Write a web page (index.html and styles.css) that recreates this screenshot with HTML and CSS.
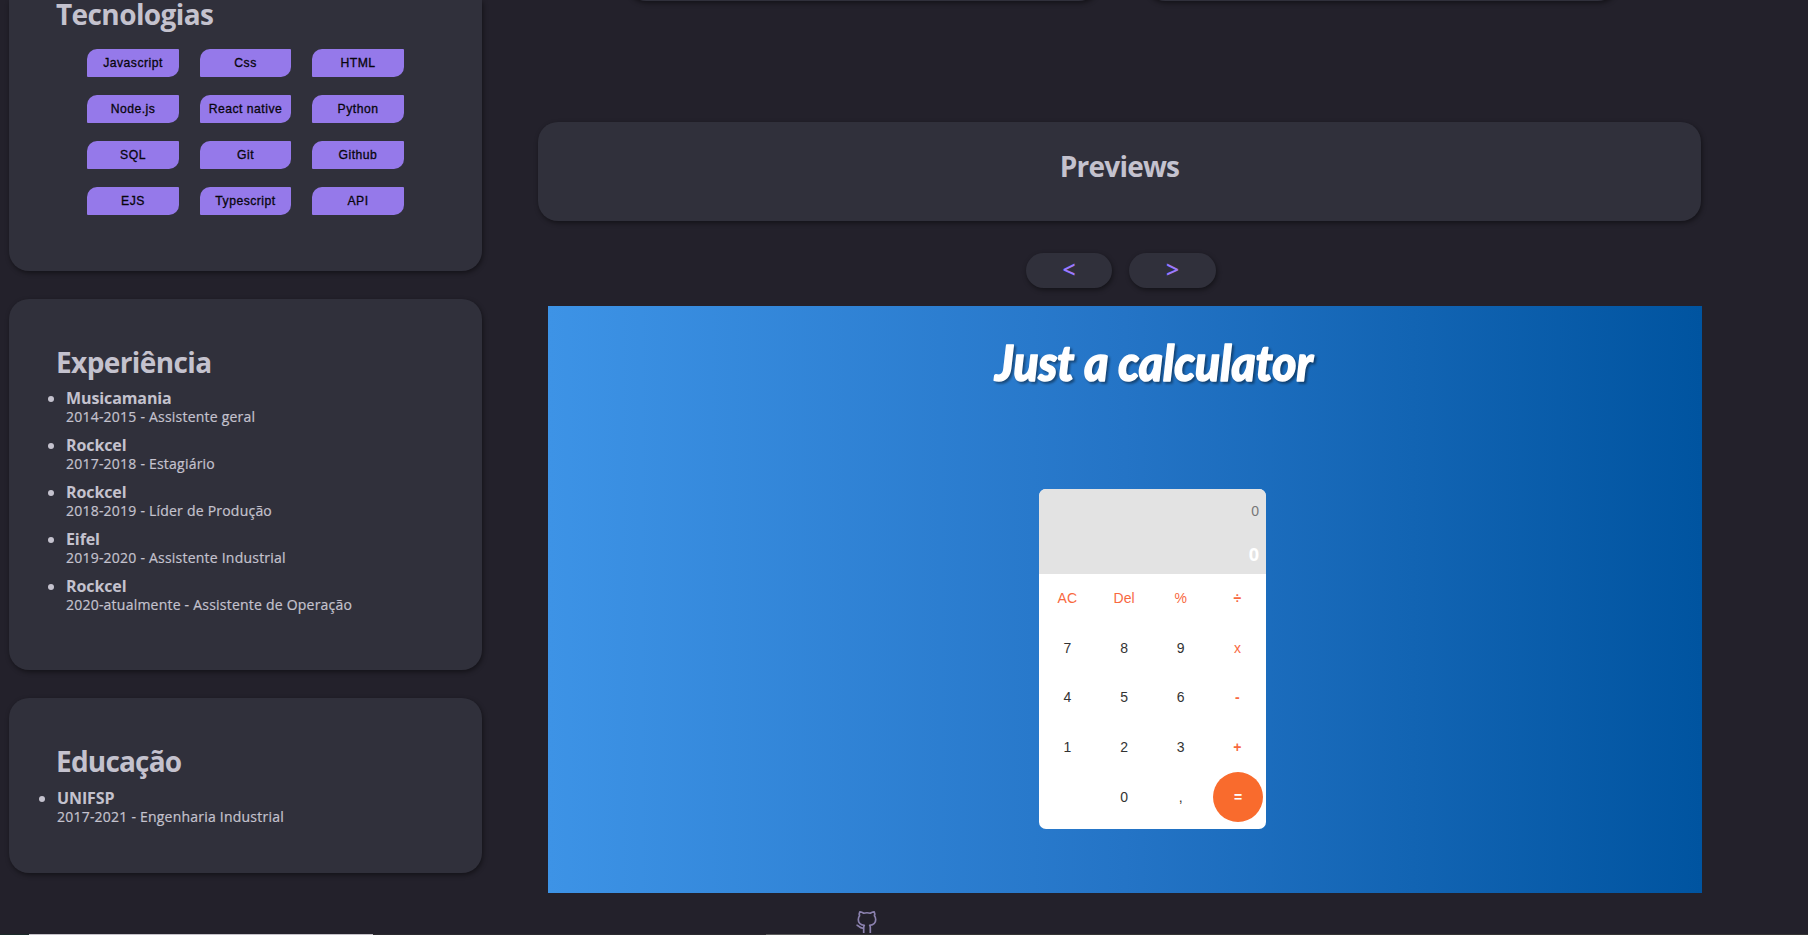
FILE: index.html
```
<!DOCTYPE html>
<html lang="pt-BR">
<head>
<meta charset="utf-8">
<title>Portfolio</title>
<link rel="stylesheet" href="styles.css">
</head>
<body>
<div class="page">
  <aside class="sidebar">
    <section class="card card-tech">
      <h2 class="title t-tech">Tecnologias</h2>
      <div class="tags">
        <span class="tag">Javascript</span><span class="tag">Css</span><span class="tag">HTML</span>
        <span class="tag">Node.js</span><span class="tag">React native</span><span class="tag">Python</span>
        <span class="tag">SQL</span><span class="tag">Git</span><span class="tag">Github</span>
        <span class="tag">EJS</span><span class="tag">Typescript</span><span class="tag">API</span>
      </div>
    </section>
    <section class="card card-exp">
      <h2 class="title t-exp">Experiência</h2>
      <ul class="list">
        <li><strong>Musicamania</strong><p>2014-2015 - Assistente geral</p></li>
        <li><strong>Rockcel</strong><p>2017-2018 - Estagiário</p></li>
        <li><strong>Rockcel</strong><p>2018-2019 - Líder de Produção</p></li>
        <li><strong>Eifel</strong><p>2019-2020 - Assistente Industrial</p></li>
        <li><strong>Rockcel</strong><p>2020-atualmente - Assistente de Operação</p></li>
      </ul>
    </section>
    <section class="card card-edu">
      <h2 class="title t-edu">Educação</h2>
      <ul class="list list-edu">
        <li><strong>UNIFSP</strong><p>2017-2021 - Engenharia Industrial</p></li>
      </ul>
    </section>
  </aside>
  <main class="main">
    <div class="projects"><div class="card project"></div><div class="card project"></div></div>
    <section class="card previews"><h2 class="title t-prev">Previews</h2></section>
    <div class="nav"><button class="nav-btn">&lt;</button><button class="nav-btn nav-next">&gt;</button></div>
    <div class="preview">
      <svg class="script-title" width="340" height="70" viewBox="0 0 340 70"><text x="9" y="53" textLength="318" lengthAdjust="spacingAndGlyphs">Just a calculator</text></svg>
      <div class="calc">
        <div class="display"><span class="prev">0</span><span class="cur">0</span></div>
        <div class="keys">
          <span class="op">AC</span><span class="op">Del</span><span class="op">%</span><span class="op sign">÷</span>
          <span>7</span><span>8</span><span>9</span><span class="op">x</span>
          <span>4</span><span>5</span><span>6</span><span class="op sign">-</span>
          <span>1</span><span>2</span><span>3</span><span class="op sign">+</span>
          <span></span><span>0</span><span>,</span><span class="eq">=</span>
        </div>
      </div>
    </div>
    <svg class="github" width="24" height="24" viewBox="0 0 24 24"><path d="M1.500 16c2.500.6 3 3.600 6.700 3.100M8.700 24v-5.500c0-1 .1-1.500.6-2.100C6 16 3.300 14.300 3.300 10.600A5.600 5.600 0 0 1 4.600 6.800 4.600 4.600 0 0 1 4.800 2.800S6.500 2.600 8.700 4.200a13 13 0 0 1 6.600 0C17.500 2.600 19.200 2.800 19.200 2.800a4.600 4.600 0 0 1 .2 4 5.600 5.600 0 0 1 1.300 3.800c0 3.700-2.700 5.400-6 5.800.5.600.6 1.100.6 2.100V24"/></svg>
  </main>
</div>
<div class="taskbar"><i class="t-start"></i><i class="t-search"></i><i class="t-gap"></i><i class="t-app"></i></div>
</body>
</html>
```
FILE: styles.css
```
* { box-sizing: border-box; }
body { margin: 0; height: 935px; overflow: hidden; background: #23212b; color: #c4c2ce; font-family: "Open Sans", "Noto Sans", sans-serif; display: flex; flex-direction: column; }
.page { height: 934px; display: flex; overflow: hidden; padding-left: 9px; }
.card { background: #30303b; border-radius: 20px; box-shadow: 1px 2px 5px rgba(0,0,0,.45); }
.sidebar { width: 473px; display: flex; flex-direction: column; }
.sidebar .card { padding-left: 48px; }
.title { margin: 0; font-size: 28px; line-height: 36px; font-weight: 700; letter-spacing: -.6px; white-space: nowrap; }
.sidebar .title { margin-left: -1px; }
.card-tech { height: 271px; border-radius: 0 0 20px 20px; margin-bottom: 28px; }
.title.t-tech { line-height: 28px; }
.card-exp { height: 371px; margin-bottom: 28px; padding-top: 45px; }
.card-edu { height: 175px; padding-top: 45px; }
.t-edu, .t-prev { letter-spacing: -.8px; }
.tags { display: grid; grid-template-columns: 92px 91px 92px; column-gap: 21px; grid-auto-rows: 28px; row-gap: 18px; margin: 21px 0 0 30px; }
.tag { display: flex; align-items: center; justify-content: center; background: #9579ea; color: #08060c; border-radius: 10px 1px; font: 12.200px "Liberation Sans", Arial, sans-serif; letter-spacing: .48px; -webkit-text-stroke: .3px #08060c; white-space: nowrap; }
.list { margin: 8px 0 0 9px; padding: 0; font-size: 16px; line-height: 20px; }
.list-edu { margin: 9px 0 0; }
.list li { height: 47px; }
.list strong { display: block; height: 19px; line-height: 20px; letter-spacing: -.1px; }
.list p { margin: 0; font-size: 14px; font-weight: 500; line-height: 19px; letter-spacing: .22px; -webkit-text-stroke: .2px #c4c2ce; white-space: nowrap; }
.main { width: 1164px; margin-left: 56px; display: flex; flex-direction: column; }
.projects { height: 122px; display: flex; gap: 46px; padding-left: 88px; }
.project { width: 473px; height: 41px; margin-top: -40px; }
.previews { width: 1163px; height: 99px; padding-top: 26px; text-align: center; }
.nav { display: flex; gap: 17px; margin: 32px 0 18px 488px; }
.nav-btn { width: 86px; height: 35px; border: 0; padding: 0 0 3px; border-radius: 18px; background: #30303b; color: #9b79ff; box-shadow: 1px 2px 5px rgba(0,0,0,.45); font: 600 23px "Open Sans", sans-serif; }
.nav-next { width: 87px; }
.preview { height: 587px; margin-left: 10px; background: linear-gradient(90deg, #3d93e6, #2474c6 50%, #0054a0); display: flex; flex-direction: column; flex: none; }
.script-title { margin: 22px 0 0 438px; overflow: visible; }
.script-title text { font: italic 900 50px Lato, sans-serif; fill: #fff; stroke: #fff; stroke-width: 1.500px; stroke-linejoin: round; filter: drop-shadow(2px 2px 1px rgba(0,0,0,.4)); }
.calc { width: 227px; height: 340px; margin: 90.500px 0 0 491px; border-radius: 7px; overflow: hidden; background: #fff; font-family: "Liberation Sans", Arial, sans-serif; }
.display { height: 85px; background: #e3e3e3; padding: 12px 7px 0; display: flex; flex-direction: column; align-items: flex-end; }
.prev { font-size: 14px; line-height: 20px; color: #777; }
.cur { margin-top: 23px; font: 700 18px/20px "Open Sans", sans-serif; color: #fff; }
.keys { display: grid; grid-template-columns: repeat(4, 56.700px); grid-auto-rows: 49.600px; }
.keys span { display: flex; align-items: center; justify-content: center; font-size: 14px; color: #333; }
.keys .op { color: #f8693f; }
.keys .sign { font-weight: 700; }
.keys .eq { width: 50px; height: 50px; margin-left: 4px; border-radius: 50%; background: #f96b2d; color: #fff; font-weight: 700; }
.github { flex: none; margin: 16px 0 0 317px; fill: none; stroke: #8b81ae; stroke-width: 1.700; stroke-linecap: butt; stroke-linejoin: round; }
.taskbar { height: 1px; display: flex; background: #343434; }
.t-start { width: 29px; background: #1b2a2a; }
.t-search { width: 344px; background: #c4c1c8; }
.t-gap { width: 393px; background: #2b2a2f; }
.t-app { width: 44px; background: #5a5a5a; }
```
